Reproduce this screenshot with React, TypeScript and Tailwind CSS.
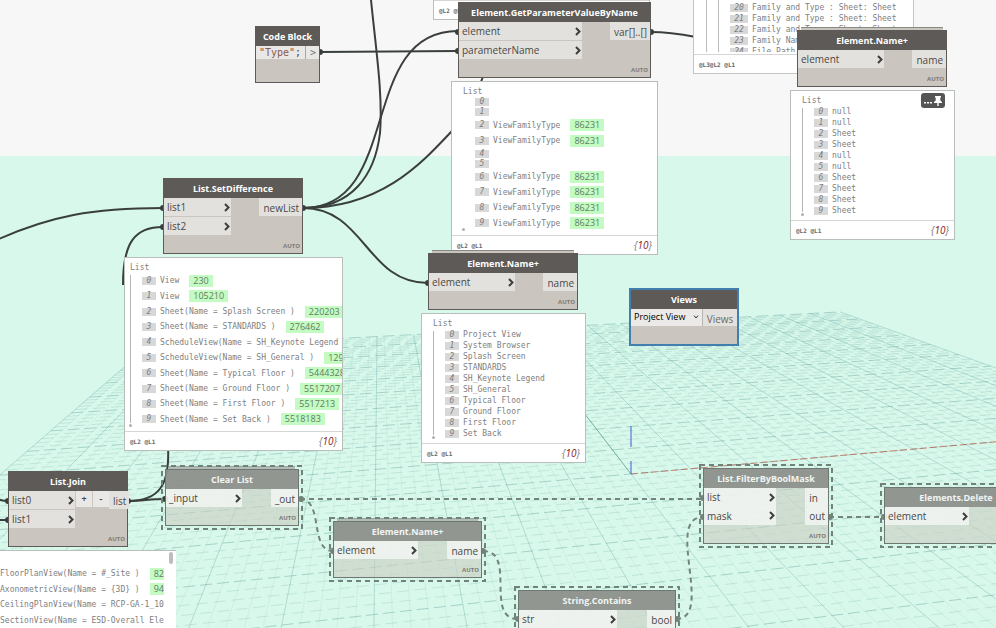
import { useState } from 'react';
import clsx from 'clsx';

type Row = { index?: number; text?: string; value?: string };

type NodeProps = {
  title: string;
  place: string;
  inputs?: string[];
  inputWidth?: string;
  outputs?: string[];
  auto?: boolean;
  dim?: boolean;
  lacing?: boolean;
  extra?: React.ReactNode;
};

const DIFFERENCE_ROWS: Row[] = [
  { index: 0, text: 'View', value: '230' },
  { index: 1, text: 'View', value: '105210' },
  { index: 2, text: 'Sheet(Name = Splash Screen )', value: '220203' },
  { index: 3, text: 'Sheet(Name = STANDARDS )', value: '276462' },
  { index: 4, text: 'ScheduleView(Name = SH_Keynote Legend' },
  { index: 5, text: 'ScheduleView(Name = SH_General )', value: '1295' },
  { index: 6, text: 'Sheet(Name = Typical Floor )', value: '5444328' },
  { index: 7, text: 'Sheet(Name = Ground Floor )', value: '5517207' },
  { index: 8, text: 'Sheet(Name = First Floor )', value: '5517213' },
  { index: 9, text: 'Sheet(Name = Set Back )', value: '5518183' },
];

const PARAMETER_ROWS: Row[] = [0, 1, 2, 3, 4, 5, 6, 7, 8, 9].map((index) =>
  [0, 1, 4, 5].includes(index)
    ? { index }
    : { index, text: 'ViewFamilyType', value: '86231' },
);

const NAME_ROWS: Row[] = [
  'Project View',
  'System Browser',
  'Splash Screen',
  'STANDARDS',
  'SH_Keynote Legend',
  'SH_General',
  'Typical Floor',
  'Ground Floor',
  'First Floor',
  'Set Back',
].map((text, index) => ({ index, text }));

const TYPE_ROWS: Row[] = [
  'null',
  'null',
  'Sheet',
  'Sheet',
  'null',
  'null',
  'Sheet',
  'Sheet',
  'Sheet',
  'Sheet',
].map((text, index) => ({ index, text }));

const FAMILY_ROWS: Row[] = [
  { index: 20, text: 'Family and Type : Sheet: Sheet' },
  { index: 21, text: 'Family and Type : Sheet: Sheet' },
  { index: 22, text: 'Family and Type : Sheet: Sheet' },
  { index: 23, text: 'Family Name' },
  { index: 24, text: 'File Path' },
];

const JOIN_ROWS: Row[] = [
  { text: 'FloorPlanView(Name = #_Site )', value: '82' },
  { text: 'AxonometricView(Name = {3D} )', value: '94' },
  { text: 'CeilingPlanView(Name = RCP-GA-1_10' },
  { text: 'SectionView(Name = ESD-Overall Ele' },
];

const WIRES = [
  'M-10 243 C50 215 95 208 163 208',
  'M163 227 C135 227 123 242 123 285',
  'M168 446 C170 484 160 501 128 501',
  'M128 501 C142 501 150 499 165 499',
  'M303 208 C403 208 357 31 458 31',
  'M303 208 C352 208 375 175 380 133 C383 95 376 50 371 0',
  'M303 208 C380 208 420 165 451 132 C470 112 478 90 484 74',
  'M303 208 C365 208 366 283 428 283',
  'M320 52 L458 51',
  'M651 32 C668 32 680 34 696 37',
  'M-2 499 Q2 501 8 501',
  'M-2 520 H8',
];

const FROZEN_WIRES = [
  'M300 499 H703',
  'M300 499 C324 499 309 551 333 551',
  'M483 551 C517 551 484 619 518 619',
  'M676 619 C715 619 664 517 703 517',
  'M829 517 H884',
];

const TERMINALS = [
  [163, 208], [163, 227], [303, 208], [128, 501], [165, 499], [458, 32],
  [458, 51], [651, 32], [428, 283], [320, 52], [8, 501], [8, 520],
];

const FROZEN_TERMINALS = [
  [301, 499], [333, 551], [483, 551], [518, 619], [677, 619], [703, 498],
  [703, 517], [830, 517], [884, 517],
];

// Projects a point of the ground plane, both coordinates from -1 to 1.
function project(u: number, v: number) {
  const a = u * 0.1396;
  const b = v * 0.7925;
  const w = 1 + a + b;
  const x = (631 + a * 4954 + b * 379) / w;
  const y = (474 + a * 93 + b * 146) / w;
  return `${x.toFixed(1)} ${y.toFixed(1)}`;
}

function gridPath(steps: number[], across: boolean) {
  return steps
    .map((n) => {
      const k = n / 50;
      return across
        ? `M${project(-1, k)}L${project(1, k)}`
        : `M${project(k, -0.9)}L${project(k, 1)}`;
    })
    .join('');
}

const STEPS = Array.from({ length: 101 }, (_, i) => i - 50);
const MAJOR = STEPS.filter((n) => n % 5 === 0);
const MINOR = STEPS.filter((n) => n % 5 !== 0);

export default function App() {
  return (
    <main className="relative flex h-screen w-full flex-col overflow-hidden bg-[#d7f8ea] font-['Open_Sans',sans-serif] text-[#4a4845]">
      <div className="h-[156px] shrink-0 bg-[#f7f7f7]" />
      <GroundGrid />
      <Wires />

      <Panel place="left-[433px] -top-[40px] w-[217px]" rows={[{}, {}]} levels="@L2 @L1" />
      <FamilyPanel />
      <Panel
        place="left-[124px] top-[257px] w-[219px]"
        title="List"
        rows={DIFFERENCE_ROWS}
        guide
        listHeight="h-[154px]"
        levels="@L2 @L1"
        count="10"
      />
      <Panel
        place="left-[451px] top-[81px] w-[207px]"
        title="List"
        rows={PARAMETER_ROWS}
        indent
        listHeight="h-[134px]"
        levels="@L2 @L1"
        count="10"
      />
      <Panel
        place="left-[421px] top-[313px] w-[165px]"
        title="List"
        rows={NAME_ROWS}
        indent
        guide
        listHeight="h-[110px]"
        levels="@L2 @L1"
        count="10"
      />
      <Panel
        place="left-[790px] top-[90px] w-[165px]"
        title="List"
        rows={TYPE_ROWS}
        indent
        guide
        listHeight="h-[110px]"
        levels="@L2 @L1"
        count="10"
        tools
      />
      <JoinPanel />

      <CodeBlock />
      <GraphNode
        title="Element.GetParameterValueByName"
        place="left-[458px] top-[2px] w-[193px]"
        inputs={['element', 'parameterName']}
        inputWidth="w-[123px]"
        outputs={['var[]..[]']}
      />
      <GraphNode
        title="List.SetDifference"
        place="left-[163px] top-[178px] w-[140px]"
        inputs={['list1', 'list2']}
        inputWidth="w-[67px]"
        outputs={['newList']}
      />
      <GraphNode
        title="Element.Name+"
        place="left-[428px] top-[253px] w-[150px]"
        inputs={['element']}
        inputWidth="w-[86px]"
        outputs={['name']}
        lacing
      />
      <GraphNode
        title="Element.Name+"
        place="left-[797px] top-[30px] w-[150px]"
        inputs={['element']}
        inputWidth="w-[86px]"
        outputs={['name']}
        lacing
      />
      <GraphNode
        title="List.Join"
        place="left-[8px] top-[471px] w-[120px]"
        inputs={['list0', 'list1']}
        inputWidth="w-[66px]"
        outputs={['list']}
        extra={
          <div className="flex gap-px pl-px">
            <StepButton label="Add input">+</StepButton>
            <StepButton label="Remove input">-</StepButton>
          </div>
        }
      />
      <ViewsNode />
      <GraphNode
        title="Clear List"
        place="left-[165px] top-[469px] w-[134px]"
        inputs={['_input']}
        inputWidth="w-[76px]"
        outputs={['_out']}
        dim
        lacing
      />
      <GraphNode
        title="Element.Name+"
        place="left-[333px] top-[521px] w-[149px]"
        inputs={['element']}
        inputWidth="w-[84px]"
        outputs={['name']}
        dim
        lacing
      />
      <GraphNode
        title="String.Contains"
        place="left-[518px] top-[590px] w-[158px]"
        inputs={['str']}
        inputWidth="w-[98px]"
        outputs={['bool']}
        auto={false}
        dim
      />
      <GraphNode
        title="List.FilterByBoolMask"
        place="left-[703px] top-[468px] w-[126px]"
        inputs={['list', 'mask']}
        inputWidth="w-[72px]"
        outputs={['in', 'out']}
        dim
      />
      <GraphNode
        title="Elements.Delete"
        place="left-[884px] top-[487px] w-[144px]"
        inputs={['element']}
        inputWidth="w-[84px]"
        auto={false}
        dim
      />
    </main>
  );
}

function GraphNode({
  title,
  place,
  inputs = [],
  inputWidth,
  outputs = [],
  auto = true,
  dim = false,
  lacing = false,
  extra,
}: NodeProps) {
  const cell = dim ? 'bg-[#f4f6f5]/80' : 'bg-[#e3e1de]';
  return (
    <section className={clsx('absolute', place)}>
      {lacing ? (
        <div
          className={clsx(
            'absolute inset-x-1 -top-[3px] h-[3px] border-t',
            dim ? 'border-[#9ba7a1] bg-[#b3bbb5]' : 'border-[#8b8986] bg-[#c9c4bd]',
          )}
        />
      ) : null}
      {dim ? <FrozenOutline /> : null}
      <div
        className={clsx(
          'border',
          dim ? 'border-[#6e7772] bg-[#cbcdc2]/60' : 'border-[#5d5a57] bg-[#cac5be]',
        )}
      >
        <NodeTitle title={title} dim={dim} />
        <div className="flex items-start">
          <div className={clsx('flex shrink-0 flex-col', !dim && 'gap-px', inputWidth)}>
            {inputs.map((name) => (
              <div key={name} className={clsx('flex items-center justify-between pl-[3px] pr-px', dim ? 'h-[19px] first:h-[18px]' : 'h-[18px]', cell)}>
                <span className="text-[10px] leading-5">{name}</span>
                <PortChevron />
              </div>
            ))}
          </div>
          {extra}
          <div className={clsx('ml-auto flex flex-col', !dim && 'gap-px')}>
            {outputs.map((name) => (
              <div key={name} className={clsx('pl-1 pr-[3px] text-[10px] leading-5', dim ? 'h-[19px] first:h-[18px]' : 'h-[18px]', cell)}>
                {name}
              </div>
            ))}
          </div>
        </div>
        <div className="h-[18px] pr-[2px] text-right text-[6px] font-bold leading-[22px] text-[#7d7973]">
          {auto ? 'AUTO' : null}
        </div>
      </div>
    </section>
  );
}

function NodeTitle({ title, dim = false }: { title: string; dim?: boolean }) {
  return (
    <h2
      className={clsx(
        'h-[19px] whitespace-nowrap text-center text-[9px] font-bold leading-[19px]',
        dim ? 'bg-[#868a86]/85 text-[#f1f5f3]' : 'bg-[#5d5a57] text-white',
      )}
    >
      {title}
    </h2>
  );
}

function PortChevron() {
  return (
    <svg viewBox="0 0 6 9" className="h-[9px] w-[6px]" fill="none" stroke="#3f3e3c" strokeWidth="2">
      <path d="M1 1 L4.5 4.5 L1 8" />
    </svg>
  );
}

function FrozenOutline() {
  return (
    <svg className="absolute -inset-[4px] h-[calc(100%+8px)] w-[calc(100%+8px)]">
      <rect
        x="1"
        y="1"
        width="100%"
        height="100%"
        className="h-[calc(100%-2px)] w-[calc(100%-2px)]"
        fill="none"
        stroke="#71827a"
        strokeWidth="2"
        strokeDasharray="5 4"
      />
    </svg>
  );
}

function StepButton({ children, label }: { children: string; label: string }) {
  return (
    <button type="button" aria-label={label} className="h-4 w-4 bg-[#e9e8e6] text-[9px] font-bold leading-4">
      {children}
    </button>
  );
}

function CodeBlock() {
  const [code, setCode] = useState('"Type"');
  return (
    <section className="absolute left-[255px] top-[26px] w-[65px] border border-[#5d5a57] bg-[#cac5be]">
      <NodeTitle title="Code Block" />
      <div className="flex h-[13px] items-center bg-[#e9e8e6] font-['DejaVu_Sans_Mono',monospace] text-[10px] leading-[13px]">
        <input
          aria-label="Code"
          value={code}
          onChange={(event) => setCode(event.target.value)}
          className="w-[39px] bg-transparent pl-[3px] text-[#8c5a4c] outline-none"
        />
        <span>;</span>
        <span className="ml-auto w-[14px] border-l border-[#aaa7a3] pl-1 text-[#777]">&gt;</span>
      </div>
      <div className="h-[23px]" />
    </section>
  );
}

function ViewsNode() {
  return (
    <section className="absolute left-[629px] top-[288px] w-[110px] border-2 border-[#427fae] bg-[#cac5be]">
      <NodeTitle title="Views" />
      <div className="flex h-[17px]">
        <label className="relative block flex-1 bg-[#ebeae9]">
          <span className="sr-only">View</span>
          <select className="block h-4 w-full appearance-none pl-[3px] text-[9px] leading-4 text-black outline-none">
            <option>Project View</option>
            <option>System Browser</option>
          </select>
          <svg viewBox="0 0 6 4" className="absolute right-[3px] top-[6px] h-1 w-[6px]" fill="none" stroke="#333">
            <path d="M1 .5 L3 3 L5 .5" />
          </svg>
        </label>
        <div className="w-[35px] border-l border-[#b9b6b2] bg-[#e3e1de] text-center text-[10px] leading-5 text-[#6b6966]">Views</div>
      </div>
      <div className="h-[18px]" />
    </section>
  );
}

function PreviewRow({ row }: { row: Row }) {
  return (
    <li className={clsx('flex min-h-0 basis-0 items-center whitespace-nowrap', !row.text ? 'grow-2' : 'grow-3')}>
      {row.index !== undefined ? (
        <span className={clsx('mr-1 h-2 shrink-0 bg-[#d8d8d8] text-center text-[8px] italic leading-2 text-[#7c7c7c]', row.index > 9 ? 'w-[18px]' : 'w-[14px]')}>
          {row.index}
        </span>
      ) : null}
      <span className="leading-[11px] text-[#808080]">{row.text}</span>
      {row.value ? (
        <span className="ml-[10px] h-3 bg-[#c3fbc3] px-1 font-['Open_Sans',sans-serif] text-[9px] leading-3 text-[#5f7d5f]">
          {row.value}
        </span>
      ) : null}
    </li>
  );
}

function PanelFooter({ levels, count }: { levels: string; count?: string }) {
  return (
    <footer className="flex h-[19px] items-center justify-between border-t border-[#d5d5d5] px-[5px]">
      <span className="text-[6px] font-bold text-[#666]">{levels}</span>
      {count ? (
        <span className="font-['Open_Sans',sans-serif] text-[10px] italic text-[#777]">
          {'{'}
          <span className="text-[#8c1c1c]">{count}</span>
          {'}'}
        </span>
      ) : null}
    </footer>
  );
}

function Panel({
  place,
  title,
  rows,
  levels,
  count,
  listHeight,
  indent = false,
  guide = false,
  tools = false,
}: {
  place: string;
  title?: string;
  rows: Row[];
  levels: string;
  count?: string;
  listHeight?: string;
  indent?: boolean;
  guide?: boolean;
  tools?: boolean;
}) {
  return (
    <section className={clsx("absolute border border-[#b8bfbb] bg-white font-['DejaVu_Sans_Mono',monospace] text-[8px]", place)}>
      <div className={clsx('overflow-hidden pb-1 pt-[5px]', indent ? 'pl-[11px]' : 'pl-[5px]')}>
        <h3 className="h-[10px] leading-[10px] text-[#808080]">{title}</h3>
        <div className="relative pl-3">
          {guide ? <div className="absolute bottom-1 left-0 top-[2px] w-px bg-[#b5b5b5]" /> : null}
          <div className="absolute -left-px bottom-0 size-[3px] rounded-full bg-[#b0b0b0]" />
          <ul className={clsx('flex flex-col', listHeight ?? 'h-5')}>
            {rows.map((row, i) => (
              <PreviewRow key={i} row={row} />
            ))}
          </ul>
        </div>
      </div>
      <PanelFooter levels={levels} count={count} />
      {tools ? (
        <div className="absolute right-[9px] top-[2px] flex h-[15px] w-6 items-center justify-center gap-[2px] rounded-[3px] bg-[#555]">
          <button type="button" aria-label="More">
            <svg viewBox="0 0 8 10" className="h-[10px] w-2" fill="#fff">
              <path d="M0 6h2v1.500H0zM3 6h2v1.500H3zM6 6h2v1.500H6z" />
            </svg>
          </button>
          <button type="button" aria-label="Pin preview">
            <svg viewBox="0 0 8 10" className="h-[10px] w-2" fill="#fff">
              <path d="M1 0h6v1.500H6.300v3L8 6v1H4.700v3H3.300V7H0V6l1.700-1.500v-3H1z" />
            </svg>
          </button>
        </div>
      ) : null}
    </section>
  );
}

function FamilyPanel() {
  return (
    <section className="absolute left-[693px] top-0 w-[221px] border-x border-b border-[#c4c4c4] bg-white font-['DejaVu_Sans_Mono',monospace] text-[8px]">
      <div className="flex h-[54px] items-start gap-[11px] pl-3">
        <div className="h-[52px] w-px bg-[#bdbdbd]" />
        <div className="h-[52px] w-px bg-[#bdbdbd]" />
        <div className="h-[52px] overflow-hidden pt-[2px]">
          <ul className="flex h-[55px] flex-col">
            {FAMILY_ROWS.map((row) => (
              <PreviewRow key={row.index} row={row} />
            ))}
          </ul>
        </div>
      </div>
      <PanelFooter levels="@L3@L2 @L1" />
    </section>
  );
}

function JoinPanel() {
  return (
    <section className="absolute left-0 top-[551px] w-[176px] bg-white pb-5 pr-3 pt-[15px] font-['DejaVu_Sans_Mono',monospace] text-[8px] shadow-[0_-1px_0_#b8bfbb]">
      <ul className="flex h-[62px] flex-col overflow-hidden">
        {JOIN_ROWS.map((row) => (
          <PreviewRow key={row.text} row={row} />
        ))}
      </ul>
      <div className="absolute right-[3px] top-px h-3 w-1 rounded-full bg-[#bdbdbd]" />
    </section>
  );
}

function Wires() {
  return (
    <svg className="absolute inset-0 h-full w-full" fill="none">
      <g stroke="#3a3f3d" strokeWidth="2">
        {WIRES.map((d) => (
          <path key={d} d={d} />
        ))}
      </g>
      <g stroke="#74847c" strokeWidth="2" strokeDasharray="5 4">
        {FROZEN_WIRES.map((d) => (
          <path key={d} d={d} />
        ))}
      </g>
      {TERMINALS.map(([x, y]) => (
        <circle key={`${x}-${y}`} cx={x} cy={y} r="3" fill="#3a3f3d" />
      ))}
      {FROZEN_TERMINALS.map(([x, y]) => (
        <circle key={`${x}-${y}`} cx={x} cy={y} r="3" fill="#74847c" />
      ))}
    </svg>
  );
}

function GroundGrid() {
  return (
    <svg className="absolute inset-0 h-full w-full" fill="none">
      <g stroke="#4a8f92" strokeWidth="1">
        <path d={gridPath(MINOR, true)} strokeDasharray="12 6" opacity=".17" />
        <path d={gridPath(MINOR, false)} opacity=".08" />
        <path d={gridPath(MAJOR, true)} strokeDasharray="12 5" opacity=".36" />
        <path d={gridPath(MAJOR, false)} opacity=".28" />
      </g>
      <path d={`M${project(0, 0)}L${project(0, 1)}`} stroke="#3f8f62" opacity=".5" />
      <path d={`M${project(0, 0)}L${project(1, 0)}`} stroke="#c0604f" strokeDasharray="7 3" opacity=".8" />
      <path d="M631 426V447M631 461V474" stroke="#3f5fd0" />
    </svg>
  );
}
